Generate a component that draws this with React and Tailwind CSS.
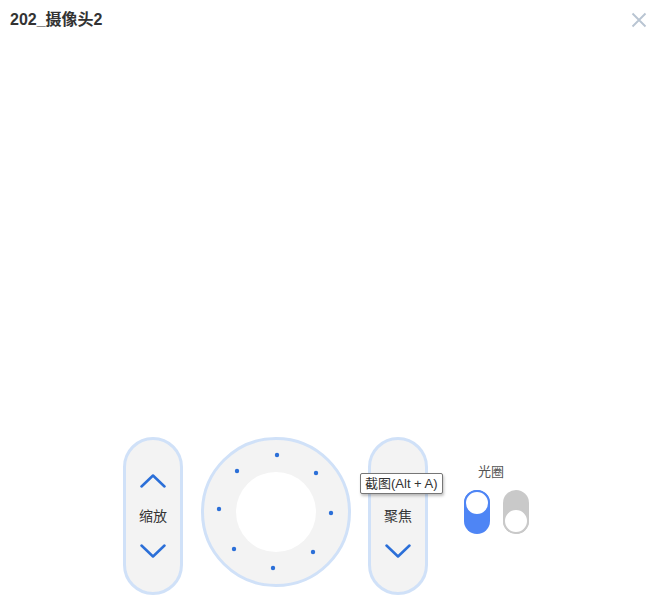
import React from 'react';

const font = { fontFamily: '"Liberation Sans", "Noto Sans CJK SC", sans-serif' };

const Chevron = ({ up }) => (
  <svg width="26" height="14" viewBox="0 0 26 14" fill="none">
    <polyline
      points={up ? '1.5,12.5 13,1.5 24.5,12.5' : '1.5,1.5 13,12.5 24.5,1.5'}
      stroke="#2b6fd8"
      strokeWidth="2.5"
      strokeLinecap="round"
      strokeLinejoin="round"
    />
  </svg>
);

const Pill = ({ label, children }) => (
  <div className="relative flex h-[158px] w-[60px] flex-col items-center justify-center gap-[18px] rounded-full border-[3px] border-[#d0e1f8] bg-[#f3f3f3]">
    <button className="flex h-[14px] items-center justify-center">
      <Chevron up />
    </button>
    <span className="text-[14px] leading-5 text-[#333]">{label}</span>
    <button className="flex h-[14px] items-center justify-center">
      <Chevron />
    </button>
    {children}
  </div>
);

// dial dots, measured from the picture
const dots = [
  [76, 18], [115, 36], [130, 76], [112, 115],
  [72, 131], [33, 112], [18, 72], [36, 34],
];

const Dial = () => (
  <div className="relative flex h-[150px] w-[150px] items-center justify-center rounded-full border-[3px] border-[#d0e1f8] bg-[#f3f3f3]">
    <div className="h-[80px] w-[80px] rounded-full bg-white" />
    <svg className="absolute left-[-3px] top-[-3px]" width="150" height="150" viewBox="0 0 150 150">
      {dots.map(([x, y], i) => (
        <circle key={i} cx={x} cy={y} r="2.2" fill="#2b6fd8" />
      ))}
    </svg>
  </div>
);

export default function App() {
  return (
    <div className="flex h-[603px] w-full flex-col bg-white" style={font}>
      <div className="flex h-[40px] items-center justify-between pl-[10px] pr-[9px]">
        <h1 className="text-[16px] font-bold text-[#333]">202_摄像头2</h1>
        <button className="flex h-[20px] w-[20px] items-center justify-center">
          <svg width="16" height="16" viewBox="0 0 16 16">
            <path d="M1.5 1.5 L14.5 14.5 M14.5 1.5 L1.5 14.5" stroke="#b9c5d2" strokeWidth="1.9" />
          </svg>
        </button>
      </div>

      <div className="flex-1" />

      <div className="flex items-start pb-[8px] pl-[123px]">
        <Pill label="缩放" />
        <div className="ml-[18px]">
          <Dial />
        </div>
        <div className="ml-[17px]">
          <Pill label="聚焦">
            <div className="absolute left-[-11px] top-[33px] whitespace-nowrap rounded-[2px] border border-[#767676] bg-white px-[4px] py-[1px] text-[13px] leading-[17px] text-[#333] shadow-[1px_2px_3px_rgba(0,0,0,0.25)]">
              截图(Alt + A)
            </div>
          </Pill>
        </div>
        <div className="ml-[36px] mt-[27px] flex flex-col items-start">
          <span className="ml-[14px] text-[13px] leading-4 text-[#555]">光圈</span>
          <div className="mt-[10px] flex gap-[13px]">
            <div className="flex h-[44px] w-[26px] flex-col items-center rounded-full bg-[#4e85f5]">
              <div className="h-[26px] w-[26px] rounded-full border-[2px] border-[#4e85f5] bg-white" />
            </div>
            <div className="flex h-[44px] w-[26px] flex-col items-center justify-end rounded-full bg-[#c9c9c9]">
              <div className="h-[26px] w-[26px] rounded-full border-[2px] border-[#c9c9c9] bg-white" />
            </div>
          </div>
        </div>
      </div>
    </div>
  );
}
